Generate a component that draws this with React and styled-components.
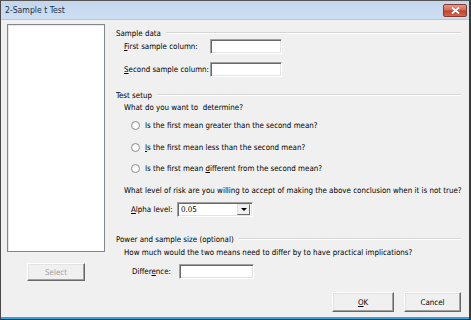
import React from "react";
import styled, { createGlobalStyle } from "styled-components";

const GlobalStyle = createGlobalStyle`
  html, body {
    margin: 0;
    padding: 0;
    background: #ffffff;
  }
  body {
    font-family: "DejaVu Sans Condensed", "Liberation Sans", Tahoma, sans-serif;
    font-stretch: condensed;
    font-size: 7.9px;
    color: #000;
  }
`;

const Window = styled.div`
  width: 471px;
  height: 320px;
  box-sizing: border-box;
  display: flex;
  flex-direction: column;
  overflow: hidden;
  background: #f0f0f0;
  border-left: 1px solid #4a4a4a;
  border-right: 2px solid #3a3a3a;
  border-top: 1px solid #555;
  border-bottom: 1px solid #333;
  box-shadow: inset 0 -2px 0 #3c9fd4;
`;

const TitleBar = styled.div`
  height: 18px;
  flex: none;
  display: flex;
  align-items: center;
  justify-content: space-between;
  padding: 0 2px 0 4px;
  background: linear-gradient(#c2d6ec, #cddff2);
  border-bottom: 1px solid #b5c7dc;
  color: #1b2f48;
  font-size: 8.6px;
`;

const CloseButton = styled.div`
  width: 22px;
  height: 11px;
  margin-top: 1px;
  border: 1px solid #8a3a2c;
  border-radius: 2px;
  background: linear-gradient(#e19a88 0%, #d66a52 45%, #c4402a 55%, #d0694f 100%);
  display: flex;
  align-items: center;
  justify-content: center;
`;

const Body = styled.div`
  flex: 1;
  display: flex;
  padding: 4px 0 0 6px;
  min-height: 0;
`;

const LeftColumn = styled.div`
  width: 98px;
  flex: none;
  display: flex;
  flex-direction: column;
  align-items: center;
`;

const ListBox = styled.div`
  width: 98px;
  height: 228px;
  box-sizing: border-box;
  background: #fff;
  border: 1px solid #828790;
  box-shadow: inset 1px 1px 0 #e8e8e8;
`;

const Button = styled.button`
  width: ${(p) => p.$w || 60}px;
  height: 20px;
  box-sizing: border-box;
  padding: 0;
  font: inherit;
  color: ${(p) => (p.disabled ? "#a0a0a0" : "#000")};
  background: #f0f0f0;
  border: 1px solid;
  border-color: #ffffff #696969 #696969 #ffffff;
  box-shadow: inset -1px -1px 0 #a0a0a0, inset 1px 1px 0 #e3e3e3;
`;

const SelectButton = styled(Button)`
  margin-top: 11px;
  height: 18px;
`;

const RightColumn = styled.div`
  flex: 1;
  min-width: 0;
  margin-left: 11px;
  padding-right: 8px;
  display: flex;
  flex-direction: column;
`;

const GroupHeader = styled.div`
  display: flex;
  align-items: center;
  height: 12px;
  margin-top: ${(p) => p.$mt}px;
  white-space: nowrap;
  &::after {
    content: "";
    flex: 1;
    margin-left: 5px;
    border-top: 1px solid #d5d5d5;
    border-bottom: 1px solid #ffffff;
  }
`;

const Line = styled.div`
  height: 12px;
  line-height: 12px;
  padding-left: ${(p) => p.$indent ?? 8}px;
  margin-top: ${(p) => p.$mt}px;
  white-space: nowrap;
`;

const FieldRow = styled.div`
  display: flex;
  align-items: center;
  height: 15px;
  margin-top: ${(p) => p.$mt}px;
  padding-left: ${(p) => p.$indent}px;
`;

const FieldLabel = styled.span`
  flex: none;
  width: ${(p) => p.$w}px;
  white-space: nowrap;
`;

const TextBox = styled.div`
  flex: none;
  width: ${(p) => p.$w}px;
  height: 15px;
  box-sizing: border-box;
  background: #fff;
  border: 1px solid;
  border-color: #a0a0a0 #ffffff #ffffff #a0a0a0;
  box-shadow: inset 1px 1px 0 #696969, inset -1px -1px 0 #e3e3e3;
`;

const Dropdown = styled(TextBox)`
  display: flex;
  align-items: center;
  justify-content: space-between;
  padding: 0 2px 0 3px;
`;

const DropArrow = styled.div`
  width: 13px;
  height: 11px;
  box-sizing: border-box;
  background: #f0f0f0;
  border: 1px solid;
  border-color: #e3e3e3 #696969 #696969 #e3e3e3;
  display: flex;
  align-items: center;
  justify-content: center;
  &::before {
    content: "";
    border-left: 3px solid transparent;
    border-right: 3px solid transparent;
    border-top: 3px solid #000;
  }
`;

const RadioRow = styled.label`
  display: flex;
  align-items: center;
  height: 12px;
  padding-left: 15px;
  margin-top: ${(p) => p.$mt}px;
  white-space: nowrap;
`;

const RadioDot = styled.span`
  flex: none;
  width: 9px;
  height: 9px;
  box-sizing: border-box;
  border-radius: 50%;
  border: 1px solid #8e8f8f;
  background: radial-gradient(circle at 60% 60%, #ffffff 30%, #e2e2e2 100%);
  margin-right: 5px;
`;

const ButtonRow = styled.div`
  display: flex;
  justify-content: flex-end;
  gap: 10px;
  margin-top: auto;
  margin-bottom: 7px;
`;

const Key = styled.u`
  text-decoration-thickness: 1px;
  text-underline-offset: 1px;
`;

export default function App() {
  return (
    <>
      <GlobalStyle />
      <Window>
        <TitleBar>
          <span>2-Sample t Test</span>
          <CloseButton>
            <svg width="9" height="7" viewBox="0 0 9 7">
              <path d="M1 0.5 L8 6.5 M8 0.5 L1 6.5" stroke="#fff" strokeWidth="1.8" />
            </svg>
          </CloseButton>
        </TitleBar>
        <Body>
          <LeftColumn>
            <ListBox />
            <SelectButton $w={58} disabled>
              Select
            </SelectButton>
          </LeftColumn>
          <RightColumn>
            <GroupHeader $mt={3}>Sample data</GroupHeader>
            <FieldRow $mt={0} $indent={8}>
              <FieldLabel $w={86}>
                <Key>F</Key>irst sample column:
              </FieldLabel>
              <TextBox $w={72} />
            </FieldRow>
            <FieldRow $mt={8} $indent={8}>
              <FieldLabel $w={86}>
                <Key>S</Key>econd sample column:
              </FieldLabel>
              <TextBox $w={72} />
            </FieldRow>

            <GroupHeader $mt={12}>Test setup</GroupHeader>
            <Line $mt={1}>What do you want to&nbsp; determine?</Line>
            <RadioRow $mt={5}>
              <RadioDot />
              <span>
                Is the first mean <Key>g</Key>reater than the second mean?
              </span>
            </RadioRow>
            <RadioRow $mt={10}>
              <RadioDot />
              <span>
                <Key>I</Key>s the first mean less than the second mean?
              </span>
            </RadioRow>
            <RadioRow $mt={9}>
              <RadioDot />
              <span>
                Is the first mean <Key>d</Key>ifferent from the second mean?
              </span>
            </RadioRow>
            <Line $mt={11}>
              What level of risk are you willing to accept of making the above conclusion when it is not true?
            </Line>
            <FieldRow $mt={5} $indent={15}>
              <FieldLabel $w={46}>
                <Key>A</Key>lpha level:
              </FieldLabel>
              <Dropdown $w={76}>
                <span>0.05</span>
                <DropArrow />
              </Dropdown>
            </FieldRow>

            <GroupHeader $mt={16}>Power and sample size (optional)</GroupHeader>
            <Line $mt={2}>How much would the two means need to differ by to have practical implications?</Line>
            <FieldRow $mt={5} $indent={16}>
              <FieldLabel $w={47}>
                Differ<Key>e</Key>nce:
              </FieldLabel>
              <TextBox $w={75} />
            </FieldRow>

            <ButtonRow>
              <Button $w={62}>
                <Key>O</Key>K
              </Button>
              <Button $w={57}>Cancel</Button>
            </ButtonRow>
          </RightColumn>
        </Body>
      </Window>
    </>
  );
}
